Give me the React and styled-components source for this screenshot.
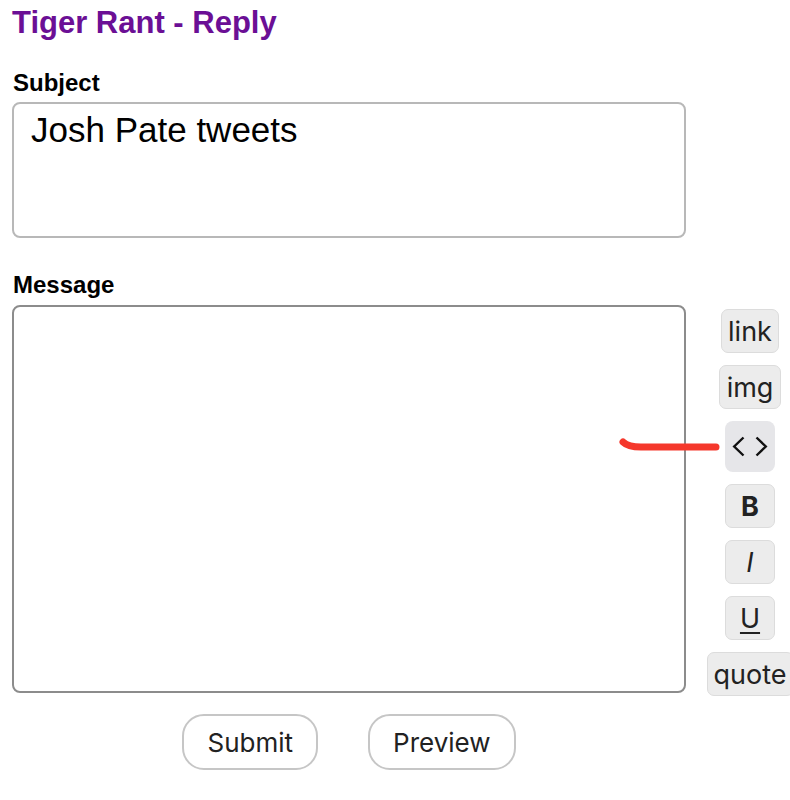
import styled, { createGlobalStyle } from 'styled-components'

const GlobalStyle = createGlobalStyle`
    html, body {
        margin: 0;
        padding: 0;
        background: #fff;
        overflow: hidden;
    }
    body {
        font-family: "Liberation Sans", Arial, sans-serif;
    }
`

const Page = styled.div`
    position: relative;
    width: 790px;
    height: 800px;
    padding: 5px 0 0 12px;
    box-sizing: border-box;
`

const Title = styled.h1`
    margin: 0;
    font-size: 31px;
    line-height: 36px;
    font-weight: 700;
    color: #6b0f95;
`

const Label = styled.label`
    display: block;
    margin: ${(p) => p.top}px 0 5px 1px;
    font-size: 24px;
    line-height: 28px;
    font-weight: 700;
    color: #000;
`

const Box = styled.textarea`
    display: block;
    flex-shrink: 0;
    box-sizing: border-box;
    width: 674px;
    height: ${(p) => p.h}px;
    margin: 0;
    padding: 6px 17px;
    border: 2px solid ${(p) => p.border};
    border-radius: 8px;
    background: #fff;
    font-family: "Liberation Sans", Arial, sans-serif;
    font-size: 35px;
    color: #000;
    resize: none;
    outline: none;
`

// message + format buttons
const MessageRow = styled.div`
    display: flex;
    flex-direction: row;
    align-items: flex-start;
    margin-top: 6px;
`

const Toolbar = styled.div`
    flex-shrink: 0;
    width: 128px;
    display: flex;
    flex-direction: column;
    align-items: center;
    gap: 12px;
    padding-top: 4px;
`

const ToolButton = styled.button`
    box-sizing: border-box;
    min-width: 50px;
    height: 44px;
    padding: 0 6px;
    border: 1px solid #dcdcdc;
    border-radius: 7px;
    background: #ececec;
    color: #222;
    font-family: Inter, "Noto Sans", sans-serif;
    font-size: 27px;
    line-height: 1;
    font-weight: ${(p) => (p.bold ? 700 : 400)};
    font-style: ${(p) => (p.italic ? 'italic' : 'normal')};
    text-decoration: ${(p) => (p.under ? 'underline' : 'none')};
    text-underline-offset: 4px;
    text-decoration-thickness: 2px;
    display: flex;
    align-items: center;
    justify-content: center;
`

const CodeButton = styled.button`
    width: 50px;
    height: 51px;
    border: none;
    border-radius: 8px;
    background: #e6e6e9;
    display: flex;
    align-items: center;
    justify-content: center;
    padding: 0;
`

const Actions = styled.div`
    width: 674px;
    display: flex;
    justify-content: center;
    gap: 50px;
    margin-top: 18px;
`

const ActionButton = styled.button`
    box-sizing: border-box;
    height: 56px;
    padding: 0 23px;
    border: 2px solid #c6c6c6;
    border-radius: 22px;
    background: #fff;
    color: #222;
    font-family: Inter, "Noto Sans", sans-serif;
    font-size: 26px;
`

const Scribble = styled.svg`
    position: absolute;
    left: 614px;
    top: 432px;
    pointer-events: none;
`

const App = () => {
    return (
        <Page>
            <GlobalStyle />
            <Title>Tiger Rant - Reply</Title>

            <Label top={28}>Subject</Label>
            <Box h={136} border="#b8b8b8" defaultValue="Josh Pate tweets" />

            <Label top={33}>Message</Label>
            <MessageRow>
                <Box h={388} border="#8c8c8c" defaultValue="" />
                <Toolbar>
                    <ToolButton>link</ToolButton>
                    <ToolButton style={{ padding: '0 7px' }}>img</ToolButton>
                    <CodeButton>
                        <svg width="38" height="21" viewBox="0 0 38 21" fill="none" stroke="#111" strokeWidth="2.4" strokeLinecap="butt" strokeLinejoin="miter">
                            <path d="M12.5 1.5 L3.2 10.5 L12.5 19.5" />
                            <path d="M25.5 1.5 L34.8 10.5 L25.5 19.5" />
                        </svg>
                    </CodeButton>
                    <ToolButton bold>B</ToolButton>
                    <ToolButton italic>I</ToolButton>
                    <ToolButton under>U</ToolButton>
                    <ToolButton>quote</ToolButton>
                </Toolbar>
            </MessageRow>

            <Actions>
                <ActionButton>Submit</ActionButton>
                <ActionButton>Preview</ActionButton>
            </Actions>

            <Scribble width="110" height="24" viewBox="0 0 110 24">
                <path d="M9 10 Q14 15 27 15 L102 15" fill="none" stroke="#f5382c" strokeWidth="7" strokeLinecap="round" />
            </Scribble>
        </Page>
    )
}

export default App
